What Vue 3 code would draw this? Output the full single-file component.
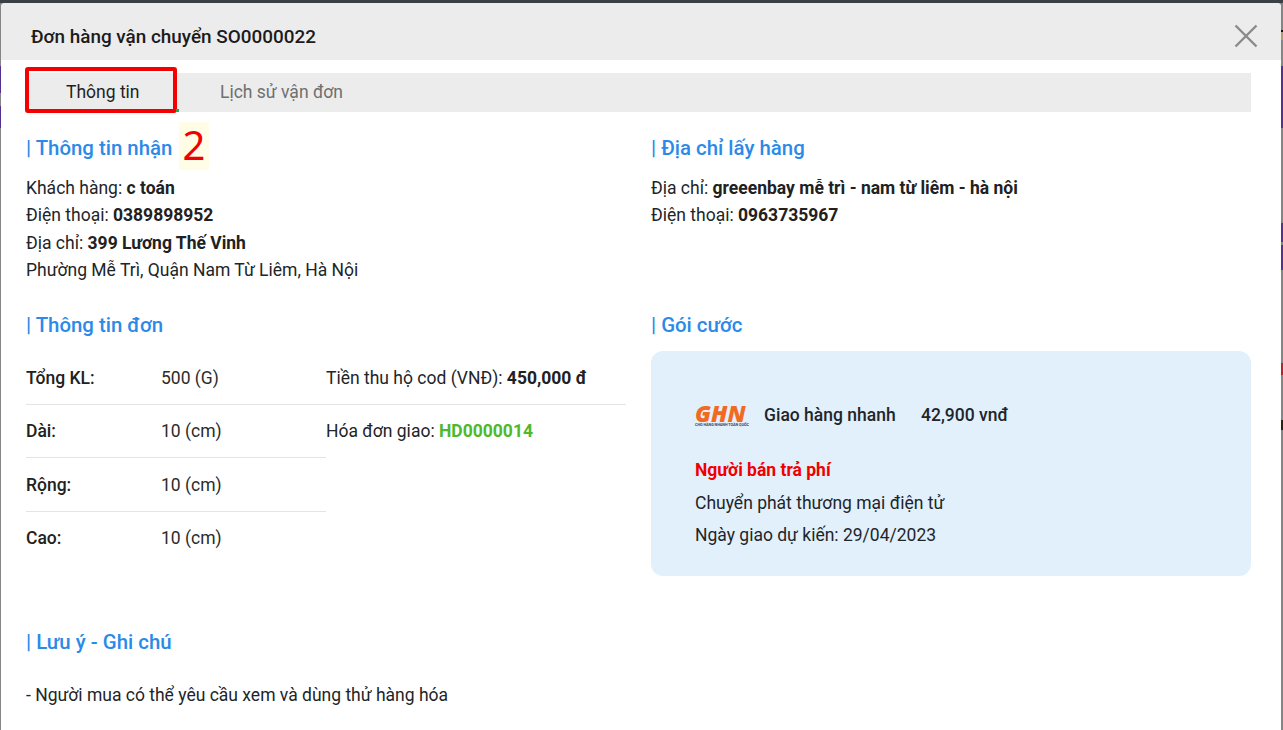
<script setup>
const rows = [
  { label: 'Dài:', value: '10 (cm)' },
  { label: 'Rộng:', value: '10 (cm)' },
  { label: 'Cao:', value: '10 (cm)' },
]
</script>

<template>
  <div class="page">
    <i v-for="n in 9" :key="n" :class="['bit', 'bit' + n]"></i>
    <div class="modal">
      <header class="head">
        <h1>Đơn hàng vận chuyển SO0000022</h1>
        <svg class="close" width="24" height="24" viewBox="0 0 24 24" aria-label="Đóng">
          <path d="M1.5 1.5 22.5 22.5M22.5 1.5 1.5 22.5" stroke="#8a8a8a" stroke-width="2.4" fill="none" />
        </svg>
      </header>

      <div class="content">
        <nav class="tabs">
          <a class="tab active">Thông tin</a>
          <a class="tab">Lịch sử vận đơn</a>
          <span class="mark"></span>
          <span class="dot"></span>
        </nav>

        <div class="two first">
          <section>
            <h2>| Thông tin nhận</h2>
            <span class="step">2</span>
            <p>Khách hàng: <b>c toán</b></p>
            <p>Điện thoại: <b>0389898952</b></p>
            <p>Địa chỉ: <b>399 Lương Thế Vinh</b></p>
            <p>Phường Mễ Trì, Quận Nam Từ Liêm, Hà Nội</p>
          </section>
          <section>
            <h2>| Địa chỉ lấy hàng</h2>
            <p>Địa chỉ: <b>greeenbay mễ trì - nam từ liêm - hà nội</b></p>
            <p>Điện thoại: <b>0963735967</b></p>
          </section>
        </div>

        <div class="two second">
          <section>
            <h2>| Thông tin đơn</h2>
            <div class="table">
              <div class="col">
                <div class="row">
                  <b>Tổng KL:</b><span>500 (G)</span>
                </div>
                <div v-for="r in rows" :key="r.label" class="row">
                  <b>{{ r.label }}</b><span>{{ r.value }}</span>
                </div>
              </div>
              <div class="side">
                <div class="side-row">Tiền thu hộ cod (VNĐ): <b>450,000 đ</b></div>
                <div class="side-row">Hóa đơn giao: <b class="green">HD0000014</b></div>
              </div>
            </div>
          </section>
          <section>
            <h2>| Gói cước</h2>
            <div class="card">
              <div class="carrier">
                <div class="logo">
                  <span class="logo-text">GHN</span>
                  <span class="logo-sub">CHO HÀNG NHANH TOÀN QUỐC</span>
                </div>
                <span class="name">Giao hàng nhanh</span>
                <span class="price">42,900 vnđ</span>
              </div>
              <p class="payer">Người bán trả phí</p>
              <p class="line">Chuyển phát thương mại điện tử</p>
              <p class="line">Ngày giao dự kiến: 29/04/2023</p>
            </div>
          </section>
        </div>

        <section class="notes">
          <h2>| Lưu ý - Ghi chú</h2>
          <p>- Người mua có thể yêu cầu xem và dùng thử hàng hóa</p>
        </section>
      </div>
    </div>
  </div>
</template>

<style>
html, body { margin: 0; overflow: hidden; }
</style>

<style scoped>
.page {
  position: relative;
  width: 1283px;
  height: 730px;
  overflow: hidden;
  background: linear-gradient(#3c3f46 0 3px, #858585 3px);
  padding: 3px 2px 0 1px;
  box-sizing: border-box;
  font-family: Roboto, "Noto Sans", sans-serif;
  font-size: 17.5px;
  color: #212529;
}
.bit { position: absolute; width: 2px; right: 0; background: #56308f; }
.bit1 { top: 66px; height: 62px; }
.bit2 { top: 223px; height: 19px; }
.bit3 { top: 245px; height: 25px; }
.bit4 { top: 32px; height: 8px; background: #b29a6a; }
.bit5 { top: 363px; height: 12px; background: #b3252b; }
.bit6 { top: 420px; height: 10px; background: #2a2216; }
.bit7 { top: 30px; height: 2px; background: #111; }
.bit8 { right: auto; left: 0; width: 1px; top: 66px; height: 27px; }
.bit9 { right: auto; left: 0; width: 1px; top: 106px; height: 22px; }
.modal {
  height: 727px;
  background: #fff;
  border-radius: 4px 4px 0 0;
  overflow: hidden;
}
.head {
  height: 57px;
  background: #ececec;
  display: flex;
  align-items: center;
  justify-content: space-between;
  padding: 10px 23px 0 30px;
  box-sizing: border-box;
}
h1 {
  margin: 0;
  font-size: 18.9px;
  font-weight: 500;
  color: #1b1b1b;
}
.close { margin-top: -2px; }
.content { padding: 13px 30px 0 25px; }
.tabs {
  position: relative;
  display: flex;
  height: 39px;
  background: #ececec;
  padding-bottom: 2px;
  box-sizing: border-box;
}
.tab {
  display: flex;
  align-items: center;
  white-space: nowrap;
  color: #6f6f6f;
}
.tab.active { color: #1f1f1f; padding-left: 40px; width: 153px; box-sizing: border-box; }
.tab + .tab { margin-left: 41px; }
.mark {
  position: absolute;
  left: -1px;
  top: -6px;
  width: 152px;
  height: 46px;
  box-sizing: border-box;
  border: 4px solid #f50000;
  border-radius: 3px;
}
.dot {
  position: absolute;
  left: 150px;
  top: 36px;
  width: 3px;
  height: 3px;
  background: #1fae4e;
}
.two {
  display: grid;
  grid-template-columns: 600px 600px;
  gap: 25px;
}
.first { margin-top: 24px; height: 177px; }
section { position: relative; }
h2 {
  margin: 0 0 14.9px;
  font-size: 20.4px;
  line-height: 24px;
  font-weight: 500;
  color: #2b8ae8;
}
p { margin: 0; line-height: 27.33px; }
b { font-weight: 700; color: #212121; }
.step {
  position: absolute;
  left: 153px;
  top: -14px;
  width: 30px;
  height: 48px;
  background: #fffde6;
  color: #f00000;
  font-family: "Noto Sans", sans-serif;
  font-size: 40px;
  line-height: 46px;
  text-align: center;
}
.second h2 { margin-bottom: 14px; }
.table { display: flex; width: 600px; padding-top: 0.67px; }
.col { width: 300px; flex: none; }
.row {
  display: flex;
  align-items: center;
  height: 53.33px;
  box-sizing: border-box;
  border-bottom: 1px solid #e4e4e4;
}
.row:nth-child(3) { padding-top: 1px; }
.row:last-child { border-bottom: 0; }
.row b { width: 135px; font-weight: 500; }
.row span { color: #2c2c2c; }
.side { flex: 1; }
.side-row {
  height: 53.33px;
  box-sizing: border-box;
  display: flex;
  align-items: center;
  white-space: pre;
}
.side-row + .side-row { padding-bottom: 1px; }
.side-row:first-child { border-bottom: 1px solid #e4e4e4; }
.green { color: #4fb82d; }
.card {
  height: 225px;
  box-sizing: border-box;
  background: #e2f0fc;
  border-radius: 12px;
  padding: 52px 44px 0;
}
.carrier { display: flex; align-items: center; height: 24px; }
.logo {
  flex: none;
  width: 54px;
  height: 25px;
  display: flex;
  flex-direction: column;
}
.logo-text {
  height: 20px;
  font: italic 800 23px/20px "Open Sans", sans-serif;
  color: #f26a22;
}
.logo-sub {
  height: 4px;
  font: 700 3.7px/4px Roboto, sans-serif;
  color: #35415f;
  white-space: nowrap;
}
.name { margin-left: 15px; font-weight: 500; width: 157px; }
.price { font-weight: 500; }
.payer { margin-top: 30px; line-height: 27px; color: #f00000; font-weight: 700; }
.line { margin-top: 6px; line-height: 27px; }
.line + .line { margin-top: 5px; }
.notes { padding-top: 54px; }
.notes h2 { margin-bottom: 28px; }
</style>
